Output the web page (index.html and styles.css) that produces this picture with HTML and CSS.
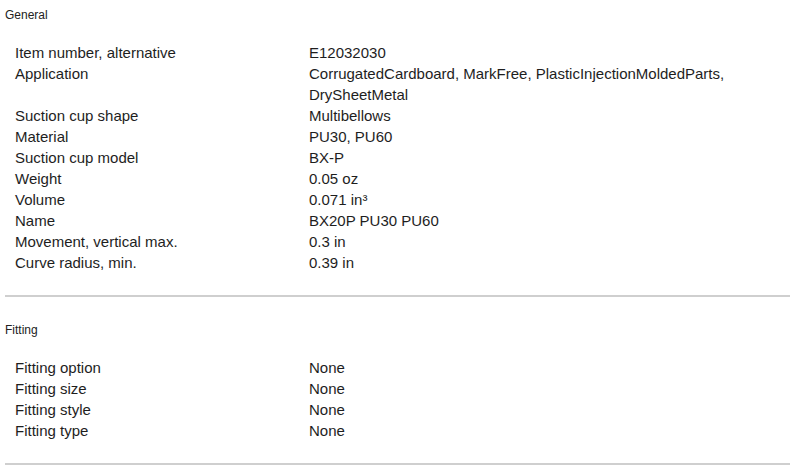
FILE: index.html
```html
<!DOCTYPE html>
<html>
<head>
<meta charset="utf-8">
<link rel="stylesheet" href="styles.css">
</head>
<body>
<div class="page">
  <section class="group">
    <h2 class="group-title">General</h2>
    <dl class="specs">
      <dt>Item number, alternative</dt><dd>E12032030</dd>
      <dt>Application</dt><dd>CorrugatedCardboard, MarkFree, PlasticInjectionMoldedParts,<br>DrySheetMetal</dd>
      <dt>Suction cup shape</dt><dd>Multibellows</dd>
      <dt>Material</dt><dd>PU30, PU60</dd>
      <dt>Suction cup model</dt><dd>BX-P</dd>
      <dt>Weight</dt><dd>0.05 oz</dd>
      <dt>Volume</dt><dd>0.071 in³</dd>
      <dt>Name</dt><dd>BX20P PU30 PU60</dd>
      <dt>Movement, vertical max.</dt><dd>0.3 in</dd>
      <dt>Curve radius, min.</dt><dd>0.39 in</dd>
    </dl>
  </section>
  <section class="group">
    <h2 class="group-title">Fitting</h2>
    <dl class="specs">
      <dt>Fitting option</dt><dd>None</dd>
      <dt>Fitting size</dt><dd>None</dd>
      <dt>Fitting style</dt><dd>None</dd>
      <dt>Fitting type</dt><dd>None</dd>
    </dl>
  </section>
</div>
</body>
</html>
```
FILE: styles.css
```css
html, body {
  margin: 0;
  padding: 0;
  background: #ffffff;
}
.page {
  padding: 0 0 0 5px;
  font-family: "Liberation Sans", Arial, sans-serif;
  color: #1e1e1e;
}
.group {
  border-bottom: 2px solid #cfcfcf;
  padding-bottom: 22px;
}
.group + .group {
  margin-top: 18px;
}
.group-title {
  margin: 0;
  padding-top: 8px;
  font-size: 12px;
  line-height: 14px;
  font-weight: normal;
  color: #222;
}
.specs {
  margin: 20px 0 0 0;
  padding-left: 10px;
  display: grid;
  grid-template-columns: 294px 1fr;
  font-size: 15px;
  line-height: 21px;
}
.specs dt, .specs dd {
  margin: 0;
}
```
